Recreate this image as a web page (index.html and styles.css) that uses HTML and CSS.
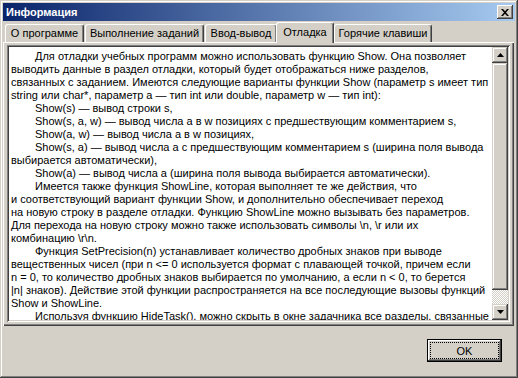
FILE: index.html
```html
<!DOCTYPE html>
<html lang="ru">
<head>
  <meta charset="UTF-8" />
  <title>Информация</title>
  <link rel="stylesheet" href="styles.css">
</head>
<body>

  <div class="window">
    <div class="titlebar">
      <span class="title">Информация</span>
      <span class="close-btn">
        <svg width="8" height="7" viewBox="0 0 8 7"><path d="M0 0h2l2 2.2L6 0h2L5 3.5 8 7H6L4 4.8 2 7H0l3-3.5z" fill="#000"/></svg>
      </span>
    </div>

    <div class="tabs">
      <div class="tab tab-about">О программе</div>
      <div class="tab tab-tasks">Выполнение заданий</div>
      <div class="tab tab-io">Ввод-вывод</div>
      <div class="tab tab-debug active">Отладка</div>
      <div class="tab tab-keys">Горячие клавиши</div>
    </div>

    <div class="page">
      <div class="memo">
        <div class="memo-text">
          <div class="ln ind">Для отладки учебных программ можно использовать функцию Show. Она позволяет</div>
          <div class="ln">выводить данные в раздел отладки, который будет отображаться ниже разделов,</div>
          <div class="ln">связанных с заданием. Имеются следующие варианты функции Show (параметр s имеет тип</div>
          <div class="ln">string или char*, параметр a — тип int или double, параметр w — тип int):</div>
          <div class="ln ind">Show(s) — вывод строки s,</div>
          <div class="ln ind">Show(s, a, w) — вывод числа a в w позициях с предшествующим комментарием s,</div>
          <div class="ln ind">Show(a, w) — вывод числа a в w позициях,</div>
          <div class="ln ind">Show(s, a) — вывод числа a с предшествующим комментарием s (ширина поля вывода</div>
          <div class="ln">выбирается автоматически),</div>
          <div class="ln ind">Show(a) — вывод числа a (ширина поля вывода выбирается автоматически).</div>
          <div class="ln ind">Имеется также функция ShowLine, которая выполняет те же действия, что</div>
          <div class="ln">и соответствующий вариант функции Show, и дополнительно обеспечивает переход</div>
          <div class="ln">на новую строку в разделе отладки. Функцию ShowLine можно вызывать без параметров.</div>
          <div class="ln">Для перехода на новую строку можно также использовать символы \n, \r или их</div>
          <div class="ln">комбинацию \r\n.</div>
          <div class="ln ind">Функция SetPrecision(n) устанавливает количество дробных знаков при выводе</div>
          <div class="ln">вещественных чисел (при n &lt;= 0 используется формат с плавающей точкой, причем если</div>
          <div class="ln">n = 0, то количество дробных знаков выбирается по умолчанию, а если n &lt; 0, то берется</div>
          <div class="ln">|n| знаков). Действие этой функции распространяется на все последующие вызовы функций</div>
          <div class="ln">Show и ShowLine.</div>
          <div class="ln ind">Используя функцию HideTask(), можно скрыть в окне задачника все разделы, связанные</div>
        </div>
        <div class="scrollbar">
          <div class="sb-btn">
            <svg width="7" height="4" viewBox="0 0 7 4"><path d="M3.5 0 7 4H0z" fill="#000"/></svg>
          </div>
          <div class="sb-track">
            <div class="sb-thumb"></div>
          </div>
          <div class="sb-btn">
            <svg width="7" height="4" viewBox="0 0 7 4"><path d="M0 0h7L3.5 4z" fill="#000"/></svg>
          </div>
        </div>
      </div>
    </div>

    <div class="footer">
      <button class="ok-btn"><span class="focus">OK</span></button>
    </div>
  </div>

</body>
</html>
```

FILE: styles.css
```css
:root {
  --face: #d4d0c8;
  --light: #ffffff;
  --shadow: #808080;
  --dark: #404040;
}

* {
  box-sizing: border-box;
}

body {
  margin: 0;
  font-family: "Liberation Sans", Arial, sans-serif;
  font-size: 11px;
  background-color: var(--face);
  color: #000;
}

.window {
  width: 518px;
  height: 378px;
  padding: 3px;
  display: flex;
  flex-direction: column;
  background-color: var(--face);
  box-shadow: inset -1px -1px var(--dark), inset 1px 1px var(--face),
              inset -2px -2px var(--shadow), inset 2px 2px var(--light);
}

.titlebar {
  height: 18px;
  flex: none;
  display: flex;
  align-items: center;
  justify-content: space-between;
  padding: 0 2px 0 3px;
  background: linear-gradient(to right, #0a246a, #a6caf0);
}

.title {
  color: #fff;
  font-weight: bold;
}

.close-btn {
  width: 16px;
  height: 14px;
  display: flex;
  align-items: center;
  justify-content: center;
  background-color: var(--face);
  box-shadow: inset -1px -1px var(--dark), inset 1px 1px var(--light),
              inset -2px -2px var(--shadow), inset 2px 2px var(--face);
}

.tabs {
  height: 21px;
  flex: none;
  display: flex;
  align-items: flex-end;
  padding-left: 2px;
}

.tab {
  height: 18px;
  line-height: 16px;
  margin-right: 1px;
  border: 1px solid;
  border-color: var(--light) var(--dark) transparent var(--light);
  border-bottom: none;
  border-radius: 3px 3px 0 0;
  box-shadow: inset -1px 0 var(--shadow);
  text-align: center;
  white-space: nowrap;
}

.tab-about { width: 79px; }
.tab-tasks { width: 119px; }
.tab-io { width: 72px; }
.tab-debug { width: 58px; }
.tab-keys { width: 98px; }

.tab.active {
  position: relative;
  z-index: 1;
  height: 21px;
  line-height: 18px;
  margin: 0 0 -1px -2px;
  background-color: var(--face);
}

.page {
  height: 284px;
  flex: none;
  margin-right: 1px;
  padding: 3px 4px 4px 4px;
  box-shadow: inset 1px 1px var(--light), inset -1px -1px var(--dark),
              inset -2px -2px var(--shadow);
}

.memo {
  height: 277px;
  display: flex;
  padding: 2px;
  background-color: #fff;
  box-shadow: inset 1px 1px var(--shadow), inset -1px -1px var(--light),
              inset 2px 2px var(--dark), inset -2px -2px var(--face);
}

.memo-text {
  flex: 1;
  overflow: hidden;
  padding: 3px 0 0 2px;
  line-height: 13px;
  white-space: nowrap;
}

.ind {
  text-indent: 24px;
}

.scrollbar {
  width: 16px;
  flex: none;
  display: flex;
  flex-direction: column;
}

.sb-btn,
.sb-thumb {
  background-color: var(--face);
  box-shadow: inset -1px -1px var(--dark), inset 1px 1px var(--face),
              inset -2px -2px var(--shadow), inset 2px 2px var(--light);
}

.sb-btn {
  height: 16px;
  flex: none;
  display: flex;
  align-items: center;
  justify-content: center;
}

.sb-track {
  flex: 1;
  background: repeating-conic-gradient(#fff 0 25%, var(--face) 0 50%) 0 0 / 2px 2px;
}

.sb-thumb {
  height: 227px;
}

.footer {
  flex: 1;
  display: flex;
  justify-content: flex-end;
  align-items: flex-start;
  padding: 13px 13px 0 0;
}

.ok-btn {
  width: 75px;
  height: 23px;
  padding: 3px;
  border: 1px solid #000;
  font: inherit;
  color: #000;
  background-color: var(--face);
  box-shadow: inset -1px -1px var(--dark), inset 1px 1px var(--light),
              inset -2px -2px var(--shadow);
}

.focus {
  display: flex;
  height: 100%;
  align-items: center;
  justify-content: center;
  outline: 1px dotted #000;
}
```
